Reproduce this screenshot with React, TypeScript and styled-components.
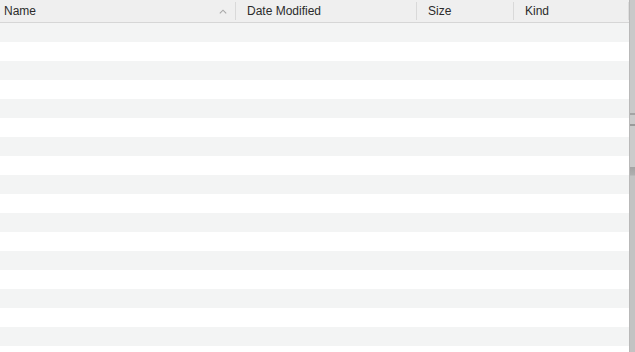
import React from 'react';
import styled, { createGlobalStyle } from 'styled-components';

const GlobalStyle = createGlobalStyle`
  html, body {
    margin: 0;
    padding: 0;
    background: #ffffff;
    overflow: hidden;
  }
  body {
    font-family: "Liberation Sans", Arial, sans-serif;
  }
`;

const Window = styled.div`
  display: flex;
  width: 635px;
  height: 352px;
  overflow: hidden;
`;

const Table = styled.div`
  flex: 1;
  display: flex;
  flex-direction: column;
  min-width: 0;
`;

const Header = styled.div`
  flex: none;
  display: grid;
  grid-template-columns: 235px 181px 97px 115px 1px;
  height: 22px;
  background: #efefef;
  border-bottom: 1px solid #d6d6d6;
`;

const HeaderCell = styled.div<{ $first?: boolean }>`
  position: relative;
  display: flex;
  align-items: center;
  padding-left: ${p => (p.$first ? '4px' : '12px')};
  padding-right: 8px;
  font-size: 12px;
  color: #2b2b2b;
  &::before {
    content: ${p => (p.$first ? 'none' : "''")};
    position: absolute;
    left: 0;
    top: 2px;
    bottom: 2px;
    width: 1px;
    background: #d9d9d9;
  }
`;

const Divider = styled.div`
  margin: 2px 0;
  background: #dedede;
`;

const Label = styled.span`
  flex: 1;
  white-space: nowrap;
`;

const SortIcon = styled.svg`
  width: 8px;
  height: 5px;
  flex: none;
`;

const Rows = styled.div`
  display: flex;
  flex-direction: column;
`;

const Row = styled.div<{ $odd: boolean }>`
  height: 19px;
  flex: none;
  background: ${p => (p.$odd ? '#f3f4f4' : '#ffffff')};
`;

const Scrollbar = styled.div`
  width: 6px;
  flex: none;
  box-sizing: border-box;
  border-left: 1px solid #b9b9b9;
  background:
    linear-gradient(
      to bottom,
      #c9c9c9 0px,
      #c9c9c9 113px,
      #a4a4a4 113px,
      #a4a4a4 115px,
      #cbcbcb 115px,
      #cbcbcb 124px,
      #9a9a9a 124px,
      #9a9a9a 126px,
      #cbcbcb 126px,
      #cbcbcb 167px,
      #a3a3a3 167px,
      #afafaf 175px,
      #c3c3c3 176px,
      #c3c3c3 352px
    );
`;

const columns = ['Name', 'Date Modified', 'Size', 'Kind'];

export default function App() {
  const rows = Array.from({ length: 18 }, (_, i) => i);
  return (
    <>
      <GlobalStyle />
      <Window>
        <Table>
          <Header>
            {columns.map((c, i) => (
              <HeaderCell key={c} $first={i === 0}>
                <Label>{c}</Label>
                {i === 0 && (
                  <SortIcon viewBox="0 0 8 5">
                    <path d="M0.8 4.4 L4 1.2 L7.2 4.4" fill="none" stroke="#a8a8a8" strokeWidth="1.1" />
                  </SortIcon>
                )}
              </HeaderCell>
            ))}
            <Divider />
          </Header>
          <Rows>
            {rows.map(i => (
              <Row key={i} $odd={i % 2 === 0} />
            ))}
          </Rows>
        </Table>
        <Scrollbar />
      </Window>
    </>
  );
}
